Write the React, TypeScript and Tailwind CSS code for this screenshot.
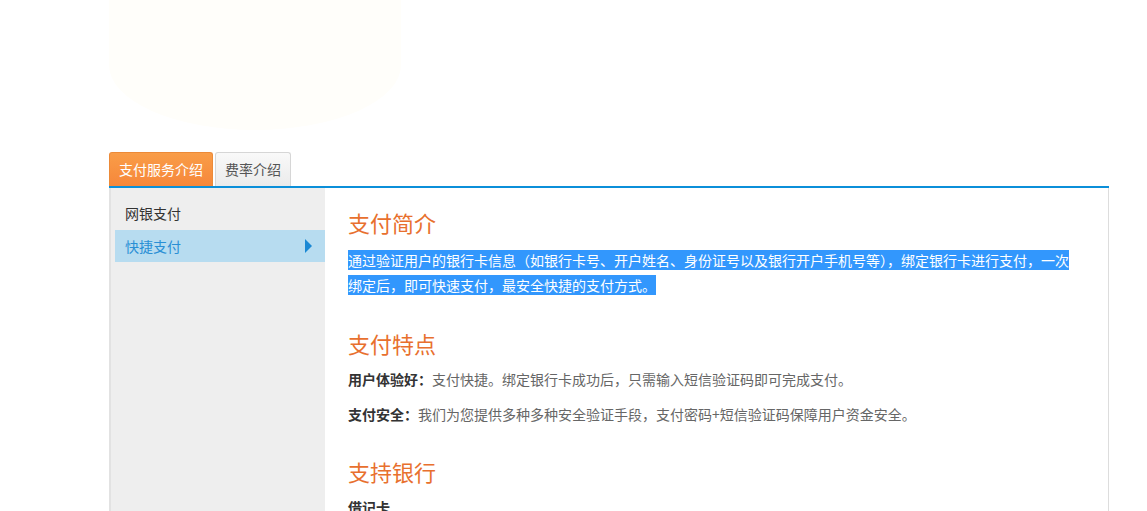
export default function App() {
  const font = { fontFamily: '"Noto Sans CJK SC", "Liberation Sans", sans-serif' };
  return (
    <div className="min-h-screen bg-white text-[14px]" style={font}>
      <div className="ml-[109px] w-[1000px]">
        {/* faint banner blob */}
        <div className="h-[152px]">
          <div className="w-[292px] h-[130px] rounded-b-[50%] bg-[#fffefa]" />
        </div>

        {/* tabs */}
        <div className="flex gap-[2px] h-[34px] items-end">
          <div className="h-[34px] w-[104px] flex items-center justify-center rounded-t-[3px] border border-b-0 border-[#ec8a38] bg-gradient-to-b from-[#f99d48] to-[#f6873a] text-white">
            支付服务介绍
          </div>
          <div className="h-[34px] w-[76px] flex items-center justify-center rounded-t-[3px] border border-b-0 border-[#d6d6d6] bg-gradient-to-b from-[#f9f9f9] to-[#ebebeb] text-[#555]">
            费率介绍
          </div>
        </div>
        <div className="h-[2px] bg-[#0b8fd9]" />

        {/* body */}
        <div className="flex border-l-2 border-r border-l-[#e2e2e2] border-r-[#dddddd] min-h-[330px]">
          <div className="w-[214px] bg-[#eeeeee] pt-[9px] pl-[4px]">
            <div className="h-[33px] flex items-center pl-[10px] text-[#333]">网银支付</div>
            <div className="h-[32px] flex items-center justify-between pl-[10px] pr-[13px] bg-[#b7dcf0] text-[#2a8fd5]">
              <span>快捷支付</span>
              <span className="w-0 h-0 border-y-[7px] border-y-transparent border-l-[7px] border-l-[#1a88d4]" />
            </div>
          </div>

          <div className="flex-1 pl-[23px] pr-[28px] pt-[19px]">
            <h3 className="text-[22px] leading-[30px] text-[#e8702e]">支付简介</h3>
            <p className="mt-[11px] leading-[25px] text-white">
              <span className="bg-[#3297fd]">
                通过验证用户的银行卡信息（如银行卡号、开户姓名、身份证号以及银行开户手机号等），绑定银行卡进行支付，一次绑定后，即可快速支付，最安全快捷的支付方式。
              </span>
            </p>

            <h3 className="mt-[30px] text-[22px] leading-[30px] text-[#e8702e]">支付特点</h3>
            <p className="mt-[9px] leading-[25px] text-[#666]">
              <b className="text-[#333]">用户体验好：</b>支付快捷。绑定银行卡成功后，只需输入短信验证码即可完成支付。
            </p>
            <p className="mt-[10px] leading-[25px] text-[#666]">
              <b className="text-[#333]">支付安全：</b>我们为您提供多种多种安全验证手段，支付密码+短信验证码保障用户资金安全。
            </p>

            <h3 className="mt-[29px] text-[22px] leading-[30px] text-[#e8702e]">支持银行</h3>
            <p className="mt-[9px] leading-[25px] font-bold text-[#333]">借记卡</p>
          </div>
        </div>
      </div>
    </div>
  );
}
